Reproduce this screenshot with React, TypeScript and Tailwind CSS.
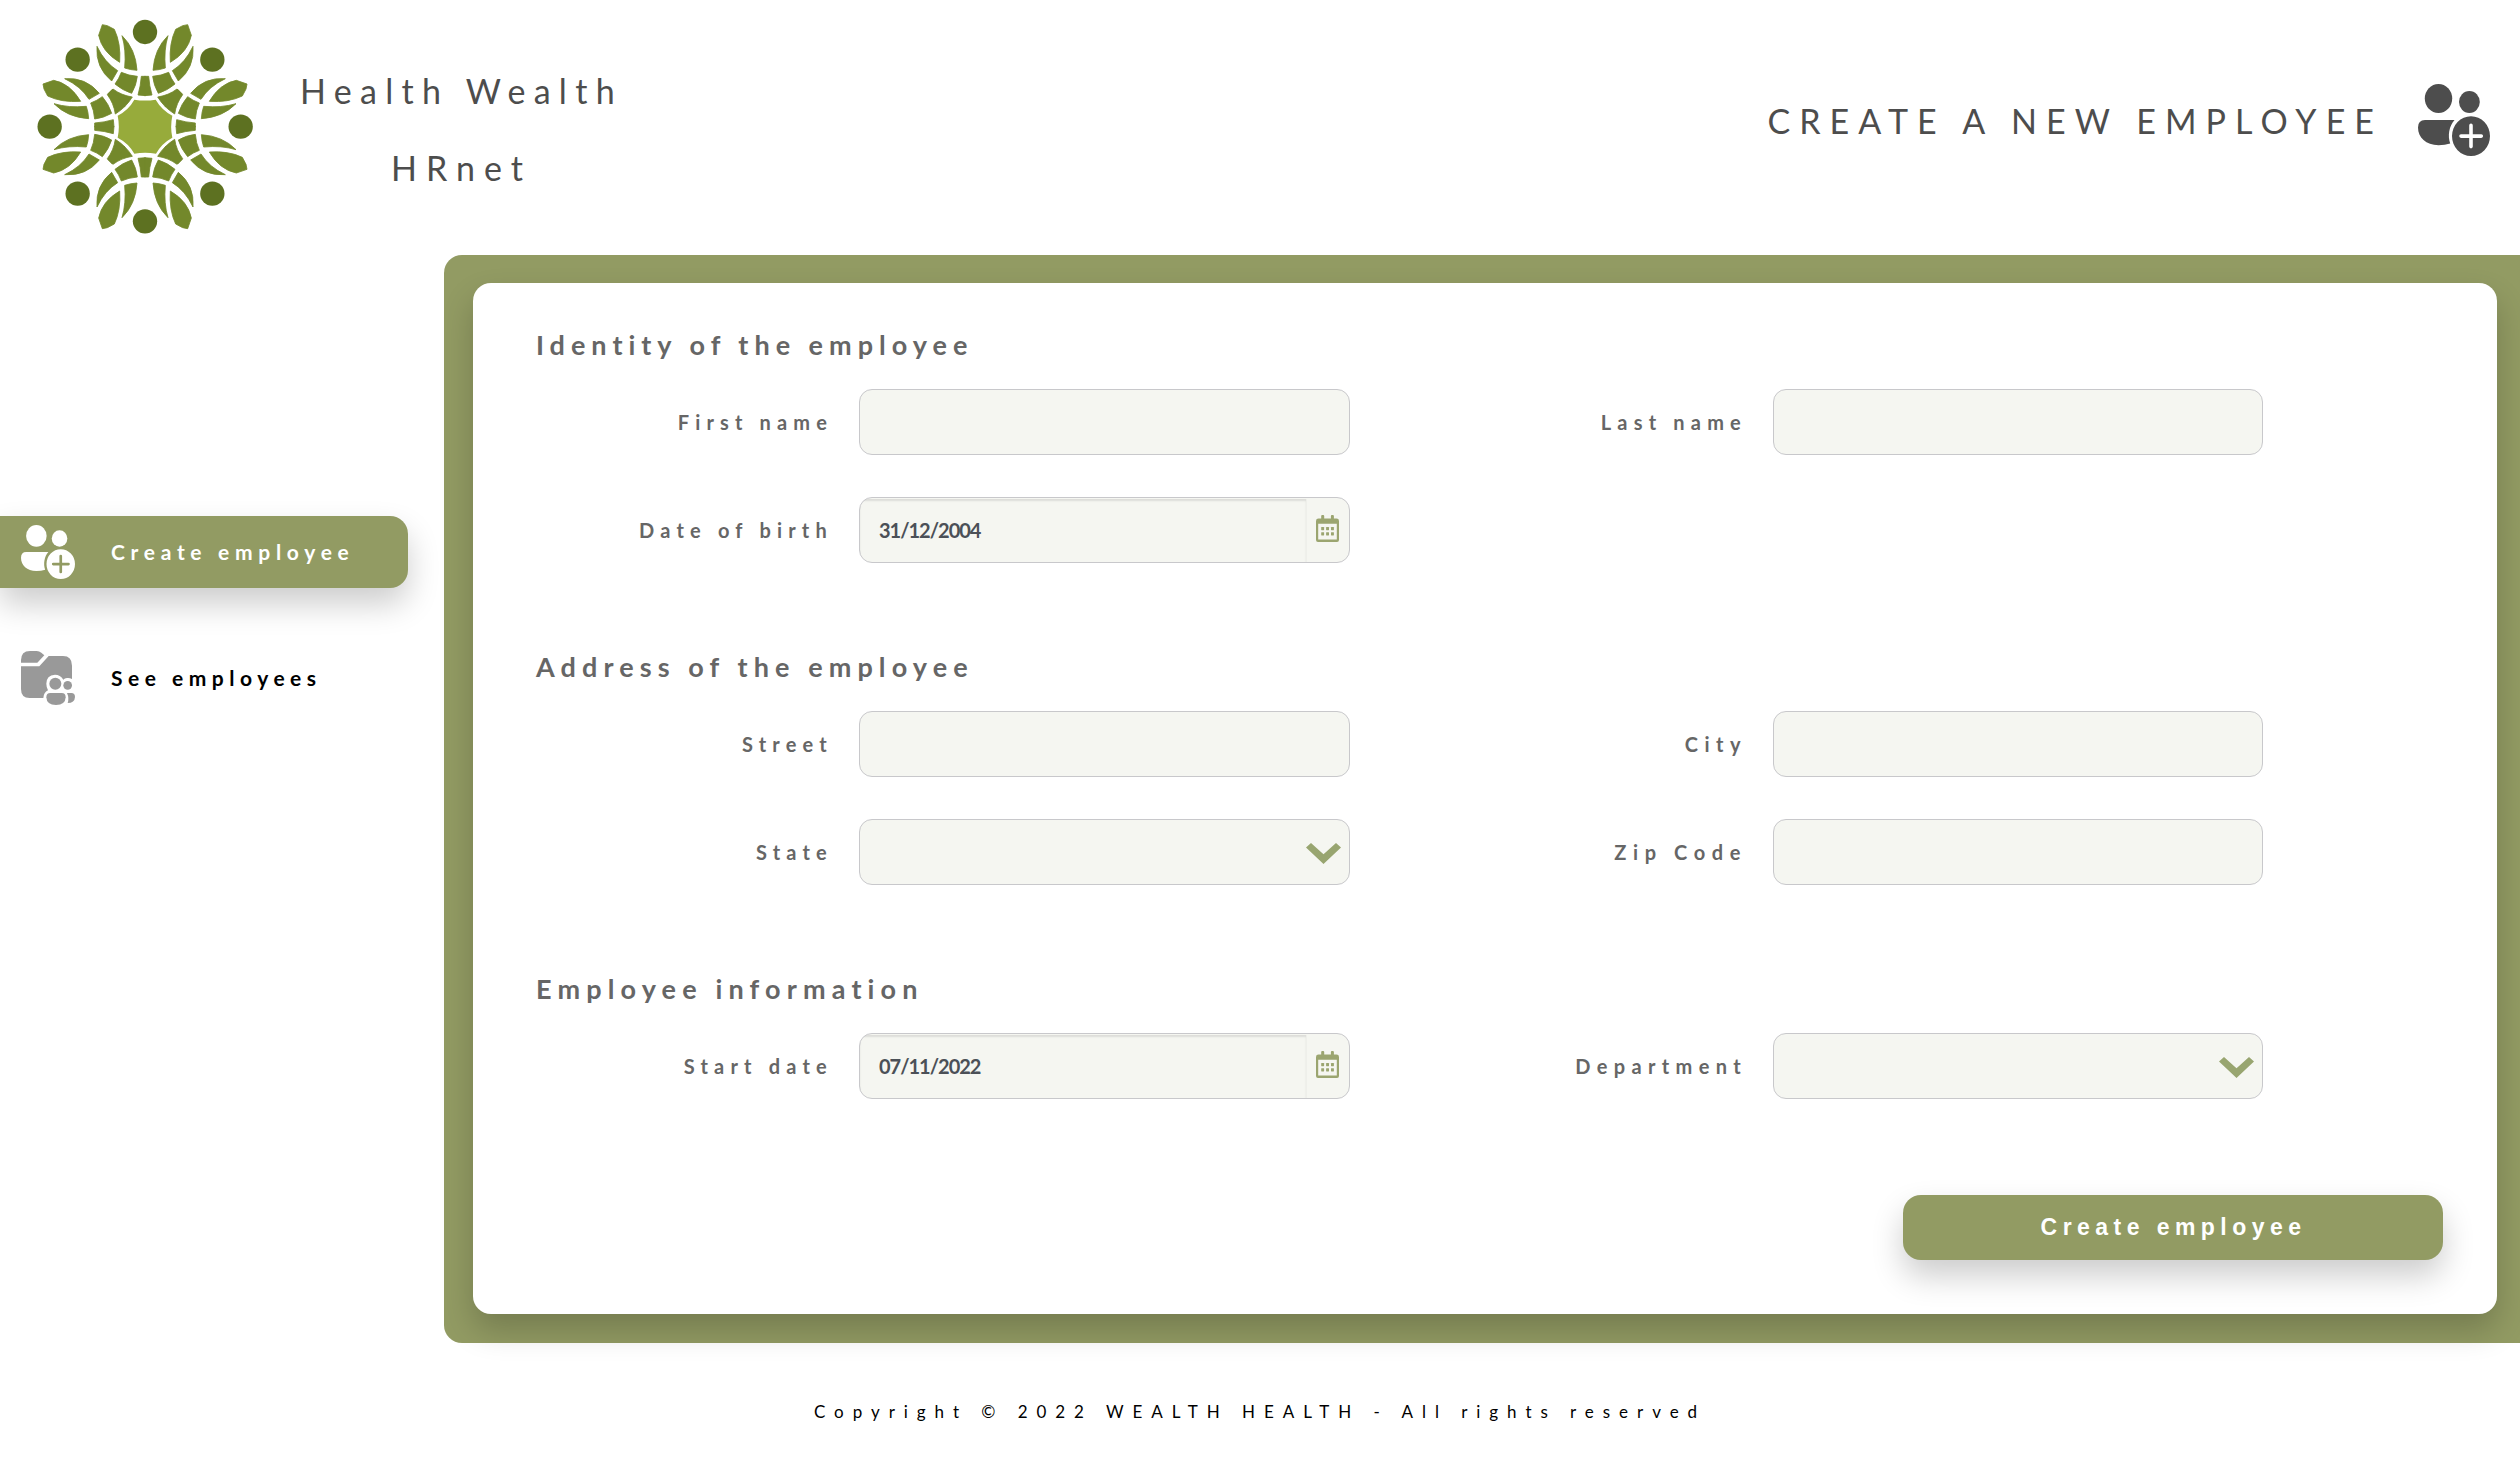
import React from "react";

const octant = [
  "M247 74 L262 77 L283 88 Q303 130 299 187 Q246 156 236 106 Z",
  "M231 139 Q254 188 293 212 L275 243 Q226 203 231 139 Z",
  "M306 107 Q347 147 351 211 Q332 210 314 204 Q319 150 306 107 Z",
  "M304 217 Q326 227 352 229 Q349 256 335 280 Q307 271 285 252 Q297 236 304 217 Z",
  "M376 229 L364 229 Q362 258 354 285 L376 287 Z",
  "M263 282 L279 267 Q304 286 337 291 Q327 307 314 320 Z",
];

function Octant() {
  return (
    <g>
      {octant.map((d) => (
        <path key={d} d={d} fill="#73882b" stroke="#73882b" strokeWidth="2.5" strokeLinejoin="round" />
      ))}
    </g>
  );
}

function Logo() {
  const quarters = [0, 90, 180, 270];
  const heads: [number, number][] = [
    [375, 96], [577, 179], [662, 380], [577, 581],
    [375, 664], [173, 581], [89, 380], [173, 179],
  ];
  return (
    <svg viewBox="0 0 750 750" className="h-[250px] w-[250px] shrink-0">
      {quarters.map((a) => (
        <g key={a} transform={`rotate(${a} 375 380)`}>
          <Octant />
          <g transform="matrix(-1 0 0 1 750 0)">
            <Octant />
          </g>
        </g>
      ))}
      <path
        d="M343 299 Q375 304 407 299 Q425 330 457 347 Q450 380 457 413 Q425 430 408 461 Q375 456 343 461 Q326 430 293 413 Q300 380 293 347 Q326 330 343 299 Z"
        fill="#97ab3b"
      />
      {heads.map(([x, y]) => (
        <circle key={`${x}-${y}`} cx={x} cy={y} r="36.5" fill="#5d7121" />
      ))}
    </svg>
  );
}

function AddPeopleIcon({ className }: { className: string }) {
  return (
    <svg viewBox="0 0 72 72" className={className} fill="currentColor">
      <ellipse cx="20.5" cy="14.5" rx="13.7" ry="14.5" />
      <ellipse cx="51.4" cy="18" rx="10.4" ry="11" />
      <path d="M7 36 H36.5 C31 42 29.5 52 32.2 59.5 Q27 61.2 20.5 61.2 C8 61.2 0 53.5 0 43.5 Q0 36 7 36 Z" />
      <path
        fillRule="evenodd"
        d="M53 32.2 A19 19.9 0 0 1 53 72 A19 19.9 0 0 1 53 32.2 Z M53 39.6 A1.8 1.8 0 0 0 51.2 41.4 V50.3 H43 A1.8 1.8 0 0 0 43 53.9 H51.2 V62.6 A1.8 1.8 0 0 0 54.8 62.6 V53.9 H63.3 A1.8 1.8 0 0 0 63.3 50.3 H54.8 V41.4 A1.8 1.8 0 0 0 53 39.6 Z"
      />
    </svg>
  );
}

function FolderPeopleIcon({ className }: { className: string }) {
  return (
    <svg viewBox="0 0 162 162" className={className} fill="currentColor">
      <path d="M0 35 V28 Q0 0 27 0 H47 Q55 0 61 5 L70 13 L49 35 Z" />
      <path d="M0 46 H55 L83 15 H126 Q153 15 153 44 V84 Q146 80 138 81 Q131 82 127 86 Q118 71 102 71 Q76 73 76 98 Q76 108 81 118 Q68 124 67 141 H26 Q0 141 0 114 Z" />
      <circle cx="103" cy="98" r="18" />
      <circle cx="140" cy="103" r="13" />
      <path d="M88 126 H122 Q134 126 134 139 Q133 162 105 162 Q77 162 76 139 Q76 126 88 126 Z" />
      <path d="M138 126 H151 Q162 126 162 138 Q161 156 140 156 Q145 141 138 126 Z" />
    </svg>
  );
}

function CalendarIcon() {
  return (
    <svg viewBox="0 0 23 27" className="-mt-[3px] h-[27px] w-[23px]" fill="#9ba570">
      <rect x="5.2" y="0" width="3" height="6" rx="1" />
      <rect x="14.9" y="0" width="3" height="6" rx="1" />
      <path
        fillRule="evenodd"
        d="M2.5 3.6 H20.5 Q23 3.6 23 6 V25 Q23 27 21 27 H2 Q0 27 0 25 V6 Q0 3.6 2.5 3.6 Z M2.2 8.8 V24.6 H20.8 V8.8 Z"
      />
      {[5.2, 10.1, 15].map((x) => (
        <g key={x}>
          <rect x={x} y="12" width="2.9" height="3.2" rx="0.4" />
          <rect x={x} y="17.2" width="2.9" height="3.2" rx="0.4" />
        </g>
      ))}
    </svg>
  );
}

function Chevron() {
  return (
    <svg viewBox="0 0 35 21" className="h-[21px] w-[35px]" fill="#98a570">
      <path d="M0 4.6 L5 0 L17.5 11.2 L30 0 L35 4.6 L17.5 21 Z" />
    </svg>
  );
}

type FieldProps = {
  label: string;
  spacing: string;
  kind?: "text" | "date" | "select";
  value?: string;
  right?: boolean;
};

function Field({ label, spacing, kind = "text", value, right }: FieldProps) {
  return (
    <div className={`flex items-center ${right ? "w-[913px]" : "w-[814px]"}`}>
      <label className={`mr-[26px] flex-1 text-right text-[20px] leading-6 font-bold text-[#666] ${spacing}`}>{label}</label>
      <div
        className={`flex h-[66px] items-center overflow-hidden rounded-[13px] border border-[#c8c8cb] bg-[#f5f6f1] ${
          right ? "w-[490px]" : "w-[491px]"
        }`}
      >
        {kind === "date" && (
          <>
            <div className="mt-px flex h-[63px] flex-1 items-center border-r border-[#eeefea] pb-0.5 pl-[19px] text-[20px] font-bold tracking-[-1px] text-[#4b5057] shadow-[inset_0_2px_2px_rgba(0,0,0,0.1)]">
              {value}
            </div>
            <div className="flex w-[42px] items-center justify-center pr-0.5">
              <CalendarIcon />
            </div>
          </>
        )}
        {kind === "select" && (
          <div className="ml-auto mr-[8px] pt-0.5">
            <Chevron />
          </div>
        )}
      </div>
    </div>
  );
}

function Section({ title, spacing, children }: { title: string; spacing: string; children: React.ReactNode }) {
  return (
    <section>
      <h2 className={`h-10 text-[27px] leading-10 font-bold text-[#666] ${spacing}`}>{title}</h2>
      <div className="mt-6 flex flex-col gap-[42px]">{children}</div>
    </section>
  );
}

export default function App() {
  return (
    <div className="flex h-[1460px] w-[2520px] flex-col overflow-hidden bg-white font-['Lato','Gill_Sans',sans-serif]">
      <header className="flex h-[255px] shrink-0 items-start pl-5">
        <Logo />
        <div className="mt-[52px] ml-[30px] text-center text-[34px] leading-[77px] text-[#4d4d4d]">
          <div className="tracking-[8.3px]">Health Wealth</div>
          <div className="tracking-[9px]">HRnet</div>
        </div>
        <div className="mt-[84px] mr-[30px] ml-auto flex h-[72px] items-center gap-[35px] text-[#4d4d4d]">
          <h1 className="pt-px text-[34px] leading-[72px] tracking-[9.05px]">CREATE A NEW EMPLOYEE</h1>
          <AddPeopleIcon className="h-[72px] w-[72px]" />
        </div>
      </header>

      <div className="flex h-[1088px] shrink-0">
        <nav className="flex w-[444px] flex-col gap-[54px] pt-[261px]">
          <a className="flex h-[72px] w-[408px] items-center gap-[36px] rounded-r-[18px] bg-[#929b63] pl-[21px] text-[21px] font-bold tracking-[5.7px] text-white shadow-[0_16px_32px_rgba(0,0,0,0.2)]">
            <AddPeopleIcon className="h-[54px] w-[54px]" />
            Create employee
          </a>
          <a className="flex h-[72px] w-[408px] items-center gap-[36px] pl-[21px] text-[21px] font-bold tracking-[5.5px] text-black">
            <FolderPeopleIcon className="h-[54px] w-[54px] text-[#999]" />
            See employees
          </a>
        </nav>

        <main className="flex flex-1 rounded-l-[18px] bg-[#929b63] pt-7 pr-[23px] pb-[29px] pl-[29px]">
          <form className="flex flex-1 flex-col rounded-[18px] bg-white pt-[42px] pr-[54px] pb-[54px] pl-[63px] shadow-[0_16px_32px_rgba(0,0,0,0.2)]">
            <div className="flex flex-col gap-[84px]">
              <Section title="Identity of the employee" spacing="tracking-[6px]">
                <div className="flex">
                  <Field label="First name" spacing="tracking-[6.15px]" />
                  <Field label="Last name" spacing="tracking-[6.2px]" right />
                </div>
                <Field label="Date of birth" spacing="tracking-[6.2px]" kind="date" value="31/12/2004" />
              </Section>
              <Section title="Address of the employee" spacing="tracking-[6.1px]">
                <div className="flex">
                  <Field label="Street" spacing="tracking-[6.2px]" />
                  <Field label="City" spacing="tracking-[6.5px]" right />
                </div>
                <div className="flex">
                  <Field label="State" spacing="tracking-[6.2px]" kind="select" />
                  <Field label="Zip Code" spacing="tracking-[6.6px]" right />
                </div>
              </Section>
              <Section title="Employee information" spacing="tracking-[6.15px]">
                <div className="flex">
                  <Field label="Start date" spacing="tracking-[6.2px]" kind="date" value="07/11/2022" />
                  <Field label="Department" spacing="tracking-[6.35px]" kind="select" right />
                </div>
              </Section>
            </div>
            <button
              type="button"
              className="mt-auto ml-auto h-[65px] w-[540px] rounded-[18px] bg-[#929b63] pl-px font-['Liberation_Sans',Arial,sans-serif] text-[23px] font-bold tracking-[5.45px] text-white shadow-[0_16px_32px_rgba(0,0,0,0.2)]"
            >
              Create employee
            </button>
          </form>
        </main>
      </div>

      <footer className="pt-[59px] text-center text-[17px] leading-5 tracking-[8.95px] text-black">
        Copyright © 2022 WEALTH HEALTH - All rights reserved
      </footer>
    </div>
  );
}
